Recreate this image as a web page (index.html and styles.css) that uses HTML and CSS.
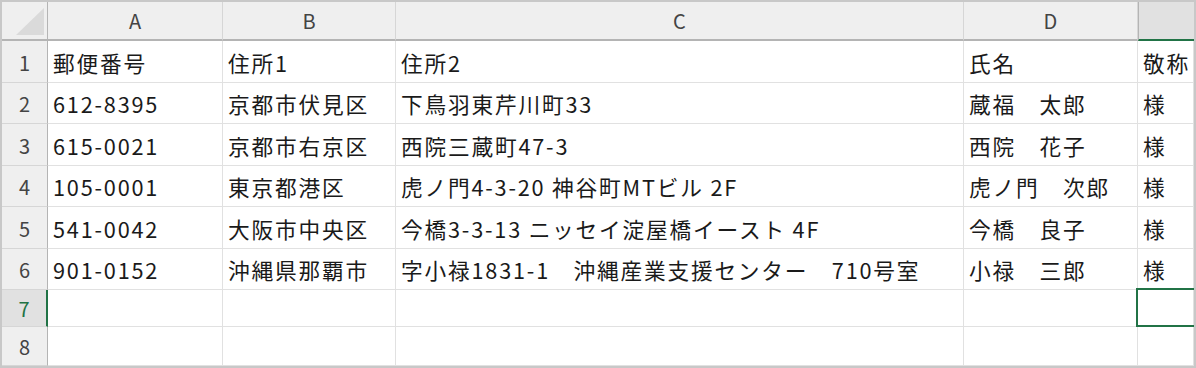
FILE: index.html
```html
<!DOCTYPE html>
<html lang="ja">
<head>
<meta charset="utf-8">
<title>宛名リスト</title>
<link rel="stylesheet" href="styles.css">
</head>
<body>
<div class="sheet">
  <div class="grid">
    <div class="corner"><span class="corner-mark"></span></div>
    <div class="col-head">A</div>
    <div class="col-head">B</div>
    <div class="col-head">C</div>
    <div class="col-head">D</div>
    <div class="col-head is-selected"></div>

    <div class="row-head">1</div>
    <div class="cell">郵便番号</div>
    <div class="cell">住所1</div>
    <div class="cell">住所2</div>
    <div class="cell">氏名</div>
    <div class="cell">敬称</div>

    <div class="row-head">2</div>
    <div class="cell">612-8395</div>
    <div class="cell">京都市伏見区</div>
    <div class="cell">下鳥羽東芹川町33</div>
    <div class="cell">蔵福　太郎</div>
    <div class="cell">様</div>

    <div class="row-head">3</div>
    <div class="cell">615-0021</div>
    <div class="cell">京都市右京区</div>
    <div class="cell">西院三蔵町47-3</div>
    <div class="cell">西院　花子</div>
    <div class="cell">様</div>

    <div class="row-head">4</div>
    <div class="cell">105-0001</div>
    <div class="cell">東京都港区</div>
    <div class="cell">虎ノ門4-3-20 神谷町MTビル 2F</div>
    <div class="cell">虎ノ門　次郎</div>
    <div class="cell">様</div>

    <div class="row-head">5</div>
    <div class="cell">541-0042</div>
    <div class="cell">大阪市中央区</div>
    <div class="cell">今橋3-3-13 ニッセイ淀屋橋イースト 4F</div>
    <div class="cell">今橋　良子</div>
    <div class="cell">様</div>

    <div class="row-head">6</div>
    <div class="cell">901-0152</div>
    <div class="cell">沖縄県那覇市</div>
    <div class="cell">字小禄1831-1　沖縄産業支援センター　710号室</div>
    <div class="cell">小禄　三郎</div>
    <div class="cell">様</div>

    <div class="row-head is-selected">7</div>
    <div class="cell"></div>
    <div class="cell"></div>
    <div class="cell"></div>
    <div class="cell"></div>
    <div class="cell is-active"></div>

    <div class="row-head">8</div>
    <div class="cell"></div>
    <div class="cell"></div>
    <div class="cell"></div>
    <div class="cell"></div>
    <div class="cell"></div>
  </div>
</div>
</body>
</html>
```
FILE: styles.css
```css
* {
  box-sizing: border-box;
}

html,
body {
  margin: 0;
  padding: 0;
  background: #ffffff;
}

body {
  font-family: "Noto Sans CJK JP", "Noto Sans", sans-serif;
}

.sheet {
  width: 1196px;
  height: 368px;
  border: 2px solid #c8c8c8;
  overflow: hidden;
  background: #ffffff;
}

.grid {
  display: grid;
  grid-template-columns: 46px 175px 173px 568px 174px 56px;
  grid-template-rows: 39px 42px 41px 42px 41px 42px 41px 37px 39px;
}

/* header strip */
.corner,
.col-head,
.row-head {
  background: #efefef;
  color: #444444;
  font-size: 20px;
  display: flex;
  align-items: center;
  justify-content: center;
  line-height: 1;
}

.corner {
  position: relative;
  border-right: 1px solid #b4b4b4;
  border-bottom: 2px solid #b4b4b4;
}

.corner-mark {
  position: absolute;
  right: 3px;
  bottom: 4px;
  width: 28px;
  height: 27px;
  background: #dadada;
  clip-path: polygon(100% 0, 100% 100%, 0 100%);
}

.col-head {
  border-right: 1px solid #d6d6d6;
  border-bottom: 2px solid #b4b4b4;
  padding-top: 1px;
}

.col-head.is-selected {
  background: #e1e1e1;
  border-bottom: 2px solid #217346;
  border-left: 1px solid #b4b4b4;
  border-right: none;
}

.row-head {
  border-right: 1px solid #b4b4b4;
  border-bottom: 1px solid #d6d6d6;
  padding-top: 2px;
}

.row-head.is-selected {
  background: #e1e1e1;
  color: #217346;
  border-right: 2px solid #217346;
}

/* body cells */
.cell {
  border-right: 1px solid #e1e1e1;
  border-bottom: 1px solid #e1e1e1;
  padding: 1px 0 0 5px;
  font-size: 21.7px;
  letter-spacing: 1.8px;
  color: #1a1a1a;
  white-space: nowrap;
  overflow: hidden;
  display: flex;
  align-items: center;
}

.cell.is-active {
  position: relative;
  overflow: visible;
}

.cell.is-active::after {
  content: "";
  position: absolute;
  left: -2px;
  top: -2px;
  right: -4px;
  bottom: -1px;
  border: 2px solid #217346;
}
```
